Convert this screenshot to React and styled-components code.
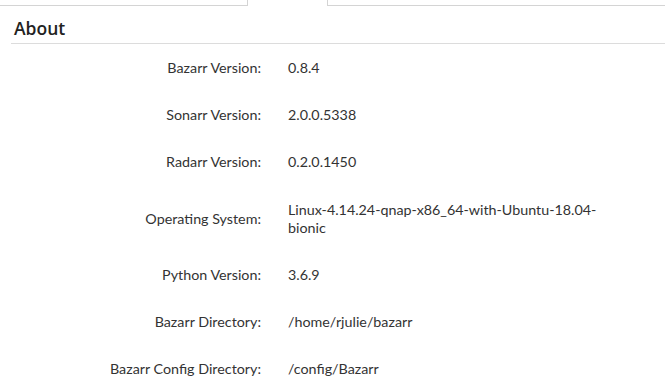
import React from "react";
import styled, { createGlobalStyle } from "styled-components";

const GlobalStyle = createGlobalStyle`
  html, body {
    margin: 0;
    padding: 0;
    background: #fff;
  }
  body {
    font-family: "Lato", "Liberation Sans", sans-serif;
    color: #333;
  }
`;

const Page = styled.div`
  width: 665px;
  height: 391px;
  overflow: hidden;
`;

const Tabs = styled.div`
  display: flex;
  height: 6px;
`;

const Tab = styled.div`
  width: ${(p) => p.width};
  flex: ${(p) => (p.grow ? 1 : "none")};
  box-sizing: border-box;
  border-bottom: ${(p) => (p.active ? "none" : "1px solid #d4d4d4")};
  border-left: ${(p) => (p.first || p.active ? "none" : "1px solid #d4d4d4")};
  border-right: ${(p) => (p.active || p.grow ? "none" : "1px solid #d4d4d4")};
`;

const Section = styled.div`
  padding: 0 0 0 11px;
`;

const Heading = styled.h2`
  margin: 0;
  padding: 10px 0 3px 3px;
  font-family: "Open Sans", "Liberation Sans", sans-serif;
  font-size: 17.5px;
  font-weight: 600;
  color: #222;
  line-height: 24px;
  border-bottom: 1px solid #dcdcdc;
`;

const Rows = styled.div`
  padding-top: 15px;
`;

const Row = styled.div`
  display: grid;
  grid-template-columns: 250px 312px;
  column-gap: 27px;
  align-items: center;
  min-height: 18px;
  margin-bottom: 29.2px;
`;

const Label = styled.div`
  text-align: right;
  font-size: 14.3px;
  line-height: 18px;
`;

const Value = styled.div`
  font-size: 14.3px;
  line-height: 18px;
`;

const info = [
  ["Bazarr Version:", "0.8.4"],
  ["Sonarr Version:", "2.0.0.5338"],
  ["Radarr Version:", "0.2.0.1450"],
  ["Operating System:", "Linux-4.14.24-qnap-x86_64-with-Ubuntu-18.04-bionic"],
  ["Python Version:", "3.6.9"],
  ["Bazarr Directory:", "/home/rjulie/bazarr"],
  ["Bazarr Config Directory:", "/config/Bazarr"],
];

export default function App() {
  return (
    <Page>
      <GlobalStyle />
      <Tabs>
        <Tab first width="248px" />
        <Tab active width="79px" />
        <Tab grow />
      </Tabs>
      <Section>
        <Heading>About</Heading>
        <Rows>
          {info.map(([label, value]) => (
            <Row key={label}>
              <Label>{label}</Label>
              <Value>{value}</Value>
            </Row>
          ))}
        </Rows>
      </Section>
    </Page>
  );
}
